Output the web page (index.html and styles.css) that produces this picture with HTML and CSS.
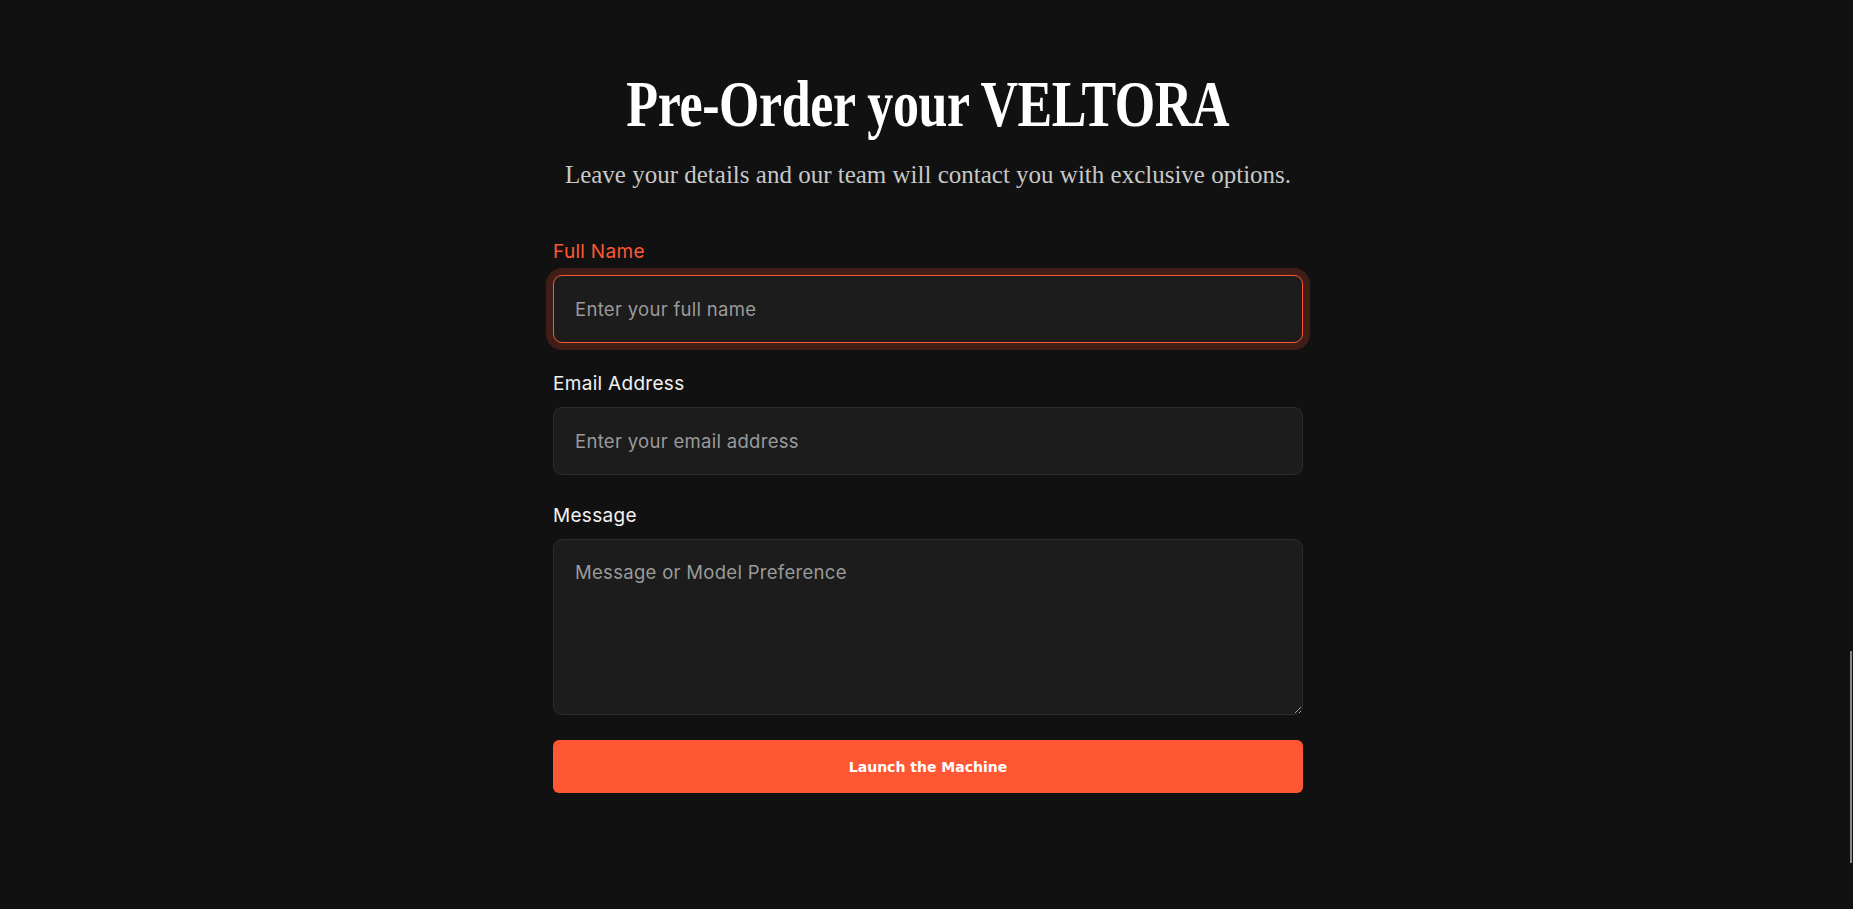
FILE: index.html
```html
<!DOCTYPE html>
<html lang="en">
<head>
<meta charset="utf-8">
<title>Pre-Order your VELTORA</title>
<link rel="stylesheet" href="styles.css">
</head>
<body>
<section class="preorder">
  <h1 class="preorder-title">Pre-Order your VELTORA</h1>
  <p class="preorder-sub">Leave your details and our team will contact you with exclusive options.</p>
  <form class="preorder-form">
    <div class="field is-focused">
      <label class="field-label" for="name">Full Name</label>
      <input class="field-input" id="name" type="text" placeholder="Enter your full name" autofocus>
    </div>
    <div class="field">
      <label class="field-label" for="email">Email Address</label>
      <input class="field-input" id="email" type="email" placeholder="Enter your email address">
    </div>
    <div class="field">
      <label class="field-label" for="msg">Message</label>
      <textarea class="field-input field-textarea" id="msg" placeholder="Message or Model Preference"></textarea>
    </div>
    <button class="submit-btn" type="button">Launch the Machine</button>
  </form>
</section>
<div class="scroll-thumb"></div>
</body>
</html>
```
FILE: styles.css
```css
html, body {
  margin: 0;
  padding: 0;
  background: #111111;
  height: 100%;
  overflow: hidden;
}
body {
  font-family: "Inter", "Open Sans", sans-serif;
  color: #eeeeee;
}
.preorder {
  display: flex;
  flex-direction: column;
  align-items: center;
  padding: 66px 0 0 3px;
}
.preorder-title {
  margin: 0;
  font-family: "Liberation Serif", "Times New Roman", serif;
  font-weight: 700;
  font-size: 65px;
  line-height: 76px;
  color: #ffffff;
  letter-spacing: -0.5px;
  transform: scaleX(0.8);
}
.preorder-sub {
  margin: 17px 0 0;
  font-family: "Liberation Serif", "Times New Roman", serif;
  font-size: 25px;
  line-height: 32px;
  color: #c8c8c8;
}
.preorder-form {
  width: 750px;
  margin-top: 48px;
  display: flex;
  flex-direction: column;
}
.field {
  display: flex;
  flex-direction: column;
  margin-bottom: 28px;
}
.field-label {
  font-size: 19px;
  line-height: 26px;
  letter-spacing: 0.3px;
  color: #f2f2f2;
  margin-bottom: 10px;
}
.field-input {
  box-sizing: border-box;
  height: 68px;
  width: 100%;
  padding: 0 21px;
  background: #1c1c1c;
  border: 1px solid #2c2c2c;
  border-radius: 9px;
  font-family: "Inter", "Open Sans", sans-serif;
  font-size: 18.5px;
  letter-spacing: 0.3px;
  color: #eeeeee;
  caret-color: #ffffff;
  outline: none;
}
.field-input::placeholder {
  color: #9a9a9a;
}
.field-textarea {
  height: 176px;
  padding: 20px 21px;
  line-height: 24px;
  resize: vertical;
}
.field.is-focused .field-label {
  color: #ff5733;
}
.field.is-focused .field-input {
  border-color: #ff5733;
  box-shadow: 0 0 0 7px rgba(255, 87, 51, 0.2);
}
.submit-btn {
  height: 53px;
  margin-top: -3px;
  border: none;
  border-radius: 6px;
  background: #ff5733;
  color: #ffffff;
  font-family: "DejaVu Sans", sans-serif;
  font-weight: 700;
  font-size: 14px;
  cursor: pointer;
}
.scroll-thumb {
  position: fixed;
  right: 1px;
  top: 651px;
  width: 2px;
  height: 212px;
  background: #8a8a8a;
}
```
